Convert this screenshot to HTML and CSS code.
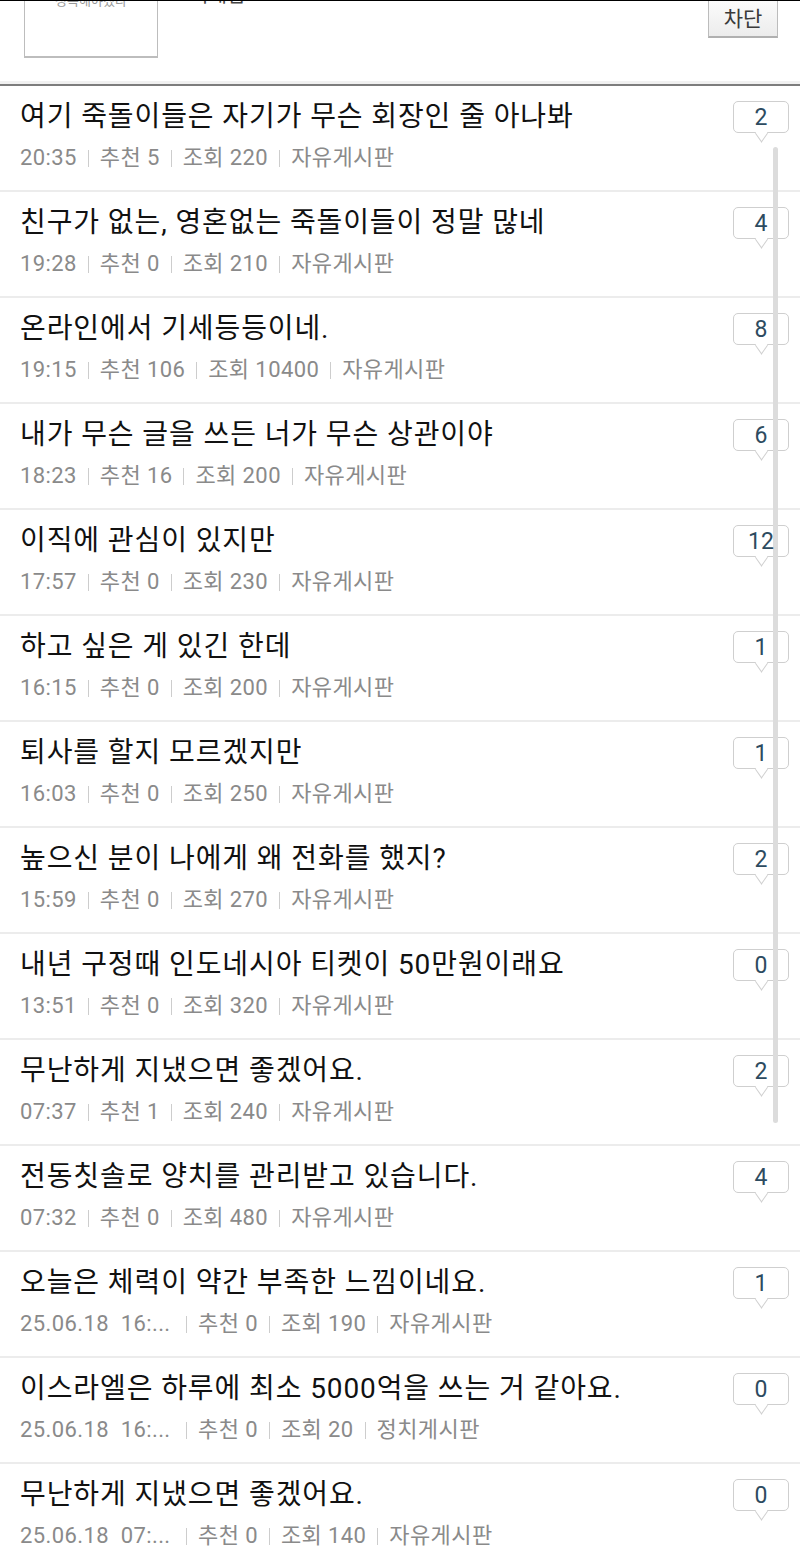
FILE: index.html
```html
<!DOCTYPE html>
<html lang="ko">
<head>
<meta charset="utf-8">
<link rel="stylesheet" href="styles.css">
</head>
<body>
<div class="page">
  <header class="header">
    <div class="thumb"><span class="thumb-text">정복해야겠다</span></div>
    <div class="nick">닉네임</div>
    <button class="block-btn">차단</button>
  </header>
  <ul class="list" id="list"></ul>
  <div class="scrollbar"></div>
</div>
<script src="app.js"></script>
</body>
</html>
```

FILE: app.js
```js
const posts = [
  ["여기 죽돌이들은 자기가 무슨 회장인 줄 아나봐", "20:35", 5, 220, "자유게시판", 2],
  ["친구가 없는, 영혼없는 죽돌이들이 정말 많네", "19:28", 0, 210, "자유게시판", 4],
  ["온라인에서 기세등등이네.", "19:15", 106, 10400, "자유게시판", 8],
  ["내가 무슨 글을 쓰든 너가 무슨 상관이야", "18:23", 16, 200, "자유게시판", 6],
  ["이직에 관심이 있지만", "17:57", 0, 230, "자유게시판", 12],
  ["하고 싶은 게 있긴 한데", "16:15", 0, 200, "자유게시판", 1],
  ["퇴사를 할지 모르겠지만", "16:03", 0, 250, "자유게시판", 1],
  ["높으신 분이 나에게 왜 전화를 했지?", "15:59", 0, 270, "자유게시판", 2],
  ["내년 구정때 인도네시아 티켓이 50만원이래요", "13:51", 0, 320, "자유게시판", 0],
  ["무난하게 지냈으면 좋겠어요.", "07:37", 1, 240, "자유게시판", 2],
  ["전동칫솔로 양치를 관리받고 있습니다.", "07:32", 0, 480, "자유게시판", 4],
  ["오늘은 체력이 약간 부족한 느낌이네요.", "25.06.18\u00a0\u00a016:...", 0, 190, "자유게시판", 1, true],
  ["이스라엘은 하루에 최소 5000억을 쓰는 거 같아요.", "25.06.18\u00a0\u00a016:...", 0, 20, "정치게시판", 0, true],
  ["무난하게 지냈으면 좋겠어요.", "25.06.18\u00a0\u00a007:...", 0, 140, "자유게시판", 0, true]
];
const list = document.getElementById("list");
posts.forEach(p => {
  const li = document.createElement("li");
  li.className = "row";
  li.innerHTML =
    '<div class="body">' +
      '<div class="title"></div>' +
      '<div class="meta">' +
        '<span class="time' + (p[6] ? ' long' : '') + '"></span>' +
        '<span class="sep"></span><span class="rec"></span>' +
        '<span class="sep"></span><span class="view"></span>' +
        '<span class="sep"></span><span class="board"></span>' +
      '</div>' +
    '</div>' +
    '<div class="bubble"><span class="count"></span></div>';
  li.querySelector(".title").textContent = p[0];
  li.querySelector(".time").textContent = p[1];
  li.querySelector(".rec").textContent = "추천 " + p[2];
  li.querySelector(".view").textContent = "조회 " + p[3];
  li.querySelector(".board").textContent = p[4];
  li.querySelector(".count").textContent = p[5];
  list.appendChild(li);
});
```

FILE: styles.css
```css
* { box-sizing: border-box; }
html, body { margin: 0; padding: 0; background: #fff; }
body {
  font-family: Roboto, "Noto Sans CJK KR", sans-serif;
  color: #111;
  width: 800px;
}
.page { position: relative; width: 800px; overflow: hidden; }

.header {
  height: 86px;
  border-top: 1px solid #000;
  border-bottom: 2px solid #7d7d7d;
  box-shadow: inset 0 -3px 0 #f1f1f1;
  display: flex;
  align-items: flex-start;
  padding: 0 22px 0 24px;
  overflow: hidden;
}
.thumb {
  width: 134px;
  height: 80px;
  margin-top: -23px;
  border: 1px solid #bdbdbd;
  border-bottom: 2px solid #bdbdbd;
  display: flex;
  justify-content: center;
  flex-shrink: 0;
}
.thumb-text {
  font-size: 13px;
  color: #999;
  line-height: 16px;
  margin-top: 14px;
}
.nick {
  margin-left: 32px;
  margin-top: -18px;
  font-size: 20px;
  line-height: 24px;
  color: #444;
  flex: 1;
}
.block-btn {
  width: 70px;
  height: 38px;
  margin-top: -1px;
  background: linear-gradient(#fbfbfb, #ececec);
  border: 1px solid #bcbcbc;
  border-bottom: 2px solid #b0b0b0;
  font-family: Roboto, "Noto Sans CJK KR", sans-serif;
  font-size: 21px;
  color: #3a3a3a;
  padding: 0;
  line-height: 34px;
}

.list { list-style: none; margin: 0; padding: 0; }
.row {
  height: 106px;
  border-bottom: 2px solid #ececec;
  display: flex;
  align-items: flex-start;
  padding: 0 11px 0 20px;
}
.body { flex: 1; padding-top: 13px; }
.title {
  font-size: 28px;
  line-height: 36px;
  color: #111;
  white-space: nowrap;
  letter-spacing: 0.9px;
}
.meta {
  margin-top: 9px;
  font-size: 22px;
  line-height: 28px;
  color: #8a8a8a;
  white-space: nowrap;
  display: flex;
  align-items: center;
  letter-spacing: 0.4px;
}
.time.long { width: 155px; }
.sep {
  width: 1px;
  height: 17px;
  background: #cdcdcd;
  margin: 1px 11px 0 11px;
}
.bubble {
  position: relative;
  margin-top: 15px;
  width: 56px;
  height: 32px;
  border: 1.5px solid #cfcfcf;
  border-radius: 5px;
  display: flex;
  align-items: center;
  justify-content: center;
  background: #fff;
}
.bubble::after {
  content: "";
  position: absolute;
  left: 50%;
  bottom: -7px;
  width: 10px;
  height: 10px;
  margin-left: -5px;
  background: #fff;
  border-right: 1.5px solid #cfcfcf;
  border-bottom: 1.5px solid #cfcfcf;
  transform: rotate(45deg) skew(10deg, 10deg);
}
.count {
  font-size: 23px;
  color: #2d4b60;
  line-height: 1;
  position: relative;
  z-index: 1;
}
.scrollbar {
  position: absolute;
  left: 773px;
  top: 147px;
  width: 5px;
  height: 976px;
  background: #dcdcdc;
  border-radius: 3px;
}
```
